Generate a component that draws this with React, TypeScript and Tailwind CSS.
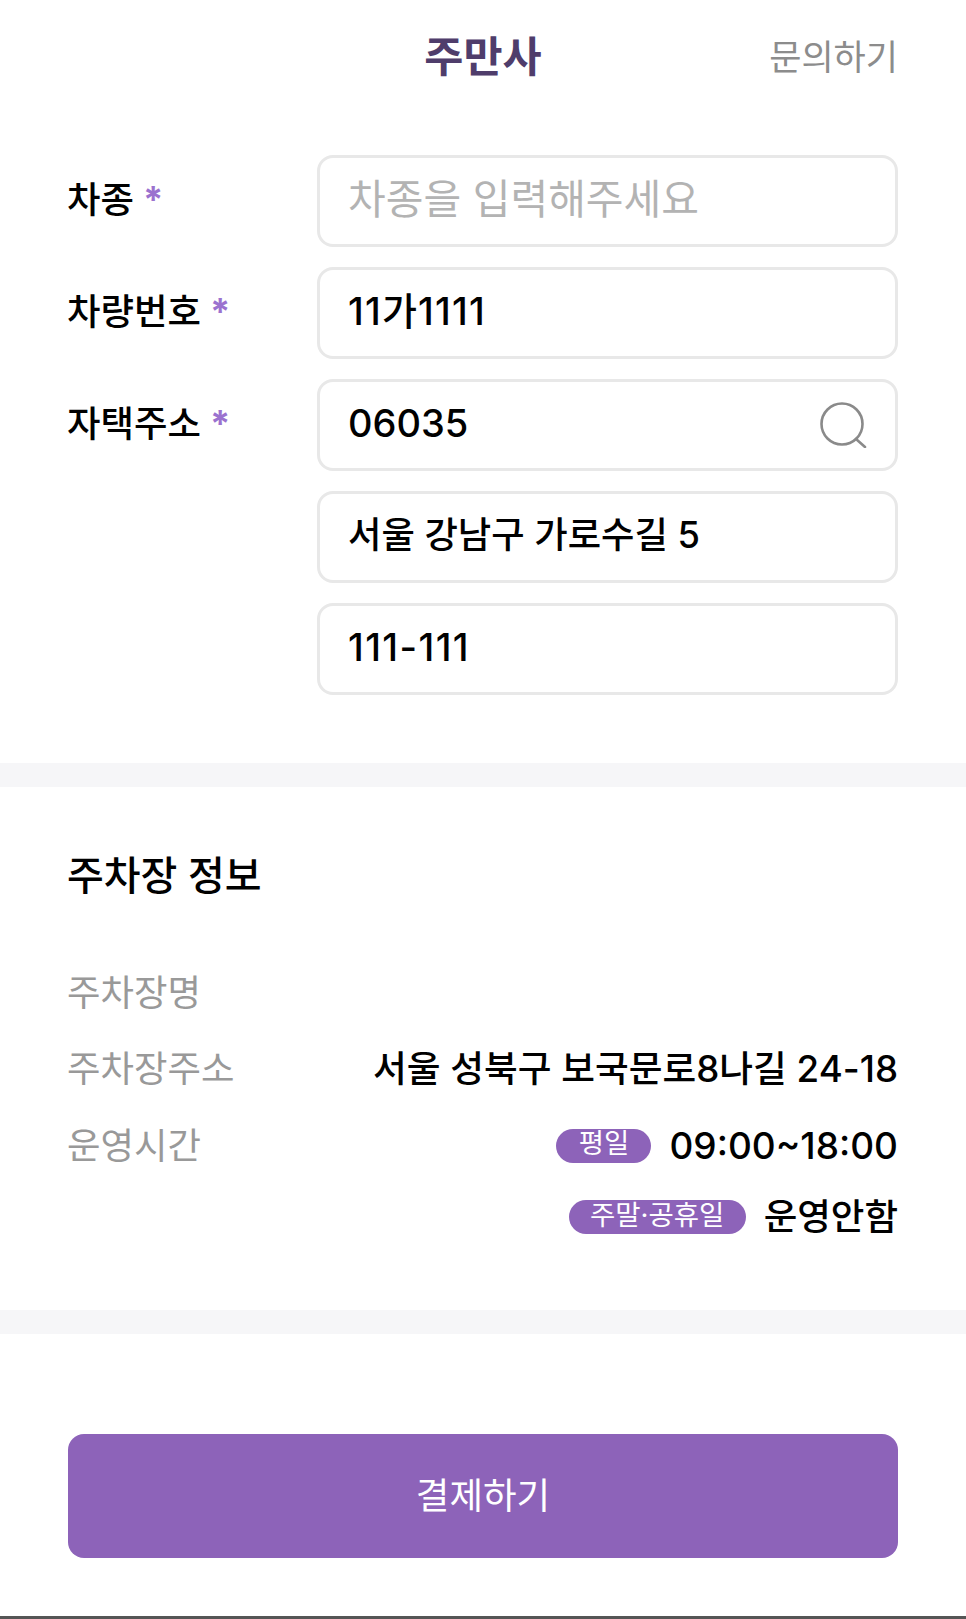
const FONT = "font-['Inter','Noto_Sans_CJK_KR',sans-serif]"

function Star() {
  return <span className="ml-[9px] font-bold text-[#9b72cf]">*</span>
}

function Field({ value, placeholder, textClass = 'text-[36.3px]', children }: { value?: string; placeholder?: string; textClass?: string; children?: React.ReactNode }) {
  return (
    <div className="flex h-[92px] w-[581px] items-center justify-between rounded-[16px] border-[3px] border-[#e8e8e8] bg-white pl-[28px] pr-[27px]">
      <span className={`leading-none -mt-[4px] ${textClass} ${placeholder ? 'text-[#b3b3b3]' : 'font-medium text-black'}`}>{value ?? placeholder}</span>
      {children}
    </div>
  )
}

function FormRow({ label, children }: { label?: string; children: React.ReactNode }) {
  return (
    <div className="flex items-start">
      <div className="w-[250px] pt-[20px] text-[36.4px] font-medium leading-[50px] text-black">
        {label}
        {label && <Star />}
      </div>
      {children}
    </div>
  )
}

function Badge({ text, width }: { text: string; width: string }) {
  return (
    <span className={`flex h-[34px] items-center justify-center rounded-full bg-[#8d63b9] text-[27.5px] leading-none text-white ${width}`}>
      <span className="-mt-[3px]">{text}</span>
    </span>
  )
}

export default function App() {
  return (
    <div className={`h-[1619px] w-[966px] overflow-hidden bg-white ${FONT}`}>
      <header className="relative flex h-[155px] justify-center pt-[30px]">
        <h1 className="text-[42.5px] font-bold leading-[54px] text-[#4f3d6b]">주만사</h1>
        <button className="absolute right-[68px] top-[32px] text-[35px] leading-[50px] text-[#8c8c8c]">문의하기</button>
      </header>

      <section className="flex flex-col gap-[20px] pl-[67px] pr-[68px]">
        <FormRow label="차종">
          <Field placeholder="차종을 입력해주세요" textClass="text-[41px]" />
        </FormRow>
        <FormRow label="차량번호">
          <Field value="11가1111" textClass="text-[38px] tracking-[1.2px]" />
        </FormRow>
        <FormRow label="자택주소">
          <Field value="06035" textClass="text-[38px]">
            <svg width="48" height="46" viewBox="0 0 48 46" fill="none" stroke="#8a8a8a" strokeWidth="2.6" strokeLinecap="round">
              <circle cx="22" cy="22" r="20.5" />
              <path d="M36 37l9 8" />
            </svg>
          </Field>
        </FormRow>
        <FormRow>
          <Field value="서울 강남구 가로수길 5" />
        </FormRow>
        <FormRow>
          <Field value="111-111" textClass="text-[38px] tracking-[1.4px]" />
        </FormRow>
      </section>

      <div className="mt-[68px] h-[24px] bg-[#f6f6f8]" />

      <section className="h-[523px] pl-[67px] pr-[68px] pt-[63px]">
        <h2 className="text-[40px] font-medium leading-[52px] text-black">주차장 정보</h2>
        <div className="mt-[66px] text-[36.4px] leading-[50px] text-[#999999]">주차장명</div>
        <div className="mt-[26px] flex items-center justify-between">
          <span className="text-[36.4px] leading-[50px] text-[#999999]">주차장주소</span>
          <span className="text-[36.7px] font-medium leading-[50px] text-black">서울 성북구 보국문로8나길 24-18</span>
        </div>
        <div className="mt-[26px] flex items-center justify-between">
          <span className="text-[36.4px] leading-[50px] text-[#999999]">운영시간</span>
          <span className="flex items-center gap-[18px]">
            <Badge text="평일" width="w-[95px]" />
            <span className="pt-[1px] text-[37px] font-medium leading-[50px] text-black">09:00~18:00</span>
          </span>
        </div>
        <div className="mt-[21px] flex items-center justify-end gap-[18px]">
          <Badge text="주말·공휴일" width="w-[177px]" />
          <span className="text-[36.5px] font-medium leading-[50px] text-black">운영안함</span>
        </div>
      </section>

      <div className="h-[24px] bg-[#f6f6f8]" />

      <div className="px-[68px] pt-[100px]">
        <button className="flex h-[124px] w-full items-center justify-center rounded-[16px] bg-[#8d63b9] pt-[1px] text-[36.5px] text-white">
          결제하기
        </button>
      </div>

      <div className="mt-[58px] h-[4px] bg-[#555555]" />
    </div>
  )
}
